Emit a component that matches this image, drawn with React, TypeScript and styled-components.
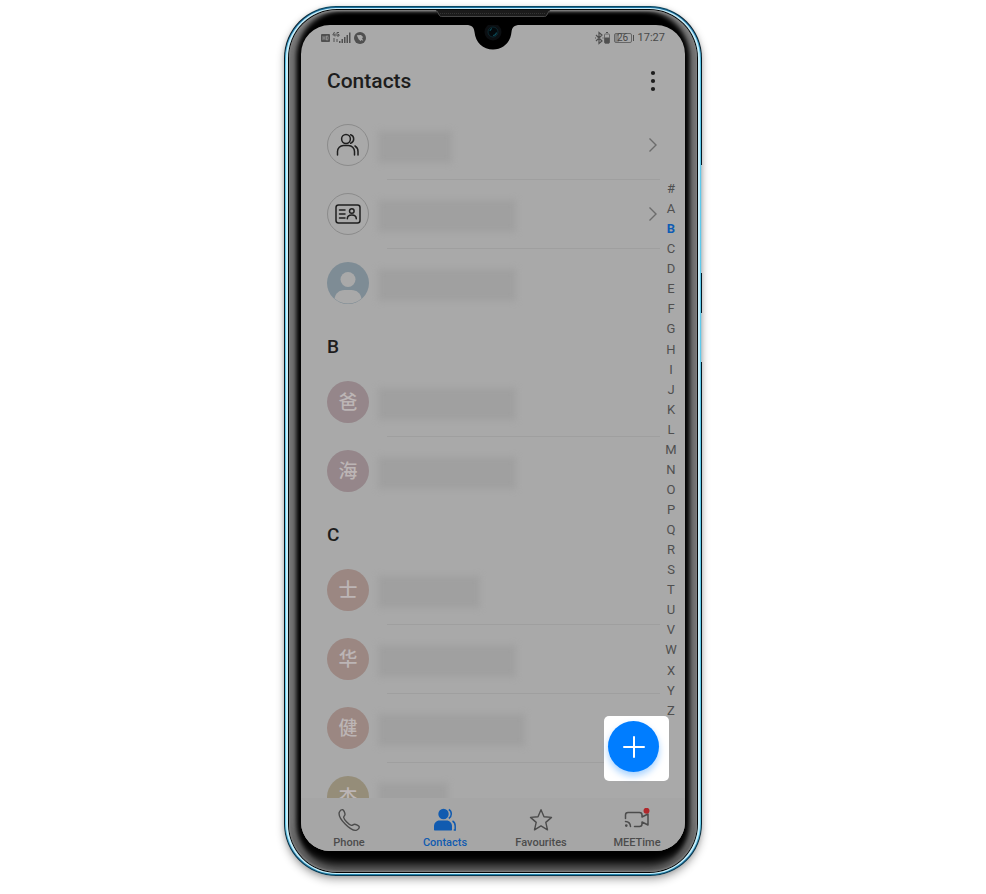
import React from "react";
import styled, { createGlobalStyle, css } from "styled-components";

const font = `Roboto, "Noto Sans CJK SC", sans-serif`;

const GlobalStyle = createGlobalStyle`
  * { box-sizing: border-box; }
  body { margin: 0; background: #fff; font-family: ${font}; }
  button { font: inherit; color: inherit; border: 0; background: none; padding: 0; cursor: pointer; }
  a { color: inherit; text-decoration: none; }
  ul, ol, h1, h2 { margin: 0; padding: 0; list-style: none; font-weight: 500; }
`;

const Stage = styled.main`
  display: flex;
  justify-content: center;
  min-height: 100vh;
  padding: 6px 0 18px;
  overflow: hidden;
`;

const Shell = styled.div`
  position: relative;
  display: flex;
  width: 100%;
  max-width: 418px;
  height: calc(100vh - 24px);
  min-height: 600px;
  padding: 1px;
  border-radius: 52px;
  background: linear-gradient(180deg, #0a4a63 0, #061a26 14px, #08131b 90%, #083850 100%);
  box-shadow: 0 4px 9px rgba(0, 0, 0, 0.3), 0 1px 4px rgba(0, 0, 0, 0.12);
`;

const SideKey = styled.span<{ $top: number; $length: number }>`
  position: absolute;
  right: 0;
  top: ${(p) => p.$top}px;
  width: 1px;
  height: ${(p) => p.$length}px;
  background: #b4c6cd;
`;

const Rim = styled.div`
  display: flex;
  flex: 1;
  min-width: 0;
  padding: 1px;
  border-radius: 51px;
  background: linear-gradient(180deg, #1c6f9f 0, #2a86b8 24px, #5cc8ea 60px, #63cbe9 94%, #2b85b4 98%, #2385ad 100%);
`;

const RimLight = styled.div`
  display: flex;
  flex: 1;
  min-width: 0;
  padding: 1px 2px;
  border-radius: 50px;
  background: #c6eefa;
`;

const Groove = styled.div`
  display: flex;
  flex: 1;
  min-width: 0;
  padding: 1px;
  border-radius: 49px;
  background: #050505;
`;

const Bezel = styled.div`
  display: flex;
  flex: 1;
  min-width: 0;
  padding: 15px 12px 21px;
  border-radius: 48px;
  background: #000;
  box-shadow:
    inset 0 0 2px 1px #858585,
    inset 0 -8px 8px 0 #585858,
    inset 7px 0 5px 0 #7e7e7e,
    inset -7px 0 5px 0 #7e7e7e;
`;

const Speaker = styled.svg`
  position: absolute;
  top: 4px;
  left: 50%;
  width: 114px;
  height: 7px;
  margin-left: -57px;
`;

const Screen = styled.div`
  position: relative;
  display: flex;
  flex: 1;
  min-width: 0;
  flex-direction: column;
  overflow: hidden;
  border-radius: 29px;
  background: #a9a9a9;
  color: #1d1d1d;
`;

const Notch = styled.svg`
  position: absolute;
  top: -1px;
  left: 50%;
  width: 54px;
  height: 26px;
  margin-left: -27px;
`;

const StatusBar = styled.div`
  display: flex;
  justify-content: space-between;
  height: 25px;
  padding: 1px 20px 0 19px;
  color: #484848;
  font-size: 11px;
  line-height: 24px;
`;

const StatusGroup = styled.div`
  display: flex;
  align-items: center;
  gap: 4px;
`;

const Battery = styled.span`
  position: relative;
  display: block;
  width: 18px;
  height: 10px;
  margin-right: 2px;
  border: 1px solid #666;
  border-radius: 2px;
  font-size: 10px;
  line-height: 8px;
  text-align: center;
  background: linear-gradient(90deg, #888 4px, transparent 4px);
  &::after {
    content: "";
    position: absolute;
    right: -3px;
    top: 1px;
    width: 1px;
    height: 6px;
    background: #505050;
  }
`;

const TitleBar = styled.header`
  display: flex;
  align-items: center;
  justify-content: space-between;
  height: 60px;
  padding: 1px 26px 0;
  h1 { font-size: 21px; line-height: 30px; font-weight: 500; }
`;

const MenuButton = styled.button`
  display: flex;
  width: 12px;
  height: 28px;
  align-items: center;
  justify-content: center;
`;

const Body = styled.div`
  position: relative;
  display: flex;
  flex: 1;
  min-height: 0;
`;

const List = styled.div`
  flex: 1;
  min-width: 0;
  padding-left: 26px;
  overflow: hidden;
`;

const Row = styled.li`
  position: relative;
  display: flex;
  align-items: center;
  gap: 9px;
  height: 69px;
`;

const Divided = styled(Row)`
  &::after {
    content: "";
    position: absolute;
    left: 60px;
    right: 0;
    bottom: -1px;
    height: 1px;
    background: #9f9f9f;
  }
`;

const SectionTitle = styled.h2`
  height: 50px;
  padding-top: 18px;
  font-size: 19px;
  line-height: 24px;
`;

const Avatar = styled.span<{ $tone?: string }>`
  display: flex;
  flex: none;
  align-items: center;
  justify-content: center;
  width: 42px;
  height: 42px;
  border-radius: 50%;
  overflow: hidden;
  font-size: 19px;
  line-height: 24px;
  color: #bcb5b5;
  ${(p) => (p.$tone ? css`padding-top: 2px; background: ${p.$tone};` : css`border: 1px solid #8b8b8b;`)}
`;

const Portrait = styled(Avatar)`
  padding-top: 0;
`;

const HiddenName = styled.span<{ $width: number }>`
  width: ${(p) => p.$width}px;
  height: 32px;
  margin-top: 4px;
  background: #a0a0a0;
  filter: blur(3px);
`;

const Chevron = styled.svg`
  width: 10px;
  height: 16px;
  margin: 0 2px 0 auto;
`;

const IndexList = styled.ol`
  display: flex;
  flex: none;
  flex-direction: column;
  justify-content: space-between;
  width: 25px;
  padding: 69px 3px 77px 0;
  font-size: 13px;
  line-height: 20px;
  font-weight: 400;
  text-align: center;
  color: #4f4f4f;
`;

const IndexLink = styled.a<{ $active: boolean }>`
  ${(p) => p.$active && css`color: #0f5cb4; font-weight: 700;`}
`;

const Spotlight = styled.div`
  position: absolute;
  right: 16px;
  bottom: 17px;
  width: 65px;
  height: 65px;
  padding: 5px 0 0 4px;
  border-radius: 5px;
  background: #fff;
`;

const AddButton = styled.button`
  display: flex;
  align-items: center;
  justify-content: center;
  width: 51px;
  height: 51px;
  border-radius: 50%;
  background: #007dff;
  box-shadow: 0 4px 7px rgba(0, 125, 255, 0.35);
`;

const Nav = styled.nav`
  display: grid;
  grid-template-columns: repeat(4, 1fr);
  flex: none;
  height: 53px;
  background: #a6a6a6;
`;

const Tab = styled.a<{ $active?: boolean }>`
  display: flex;
  flex-direction: column;
  align-items: center;
  gap: 4px;
  padding-top: 10px;
  font-size: 11px;
  font-weight: 500;
  line-height: 14px;
  color: ${(p) => (p.$active ? "#115bb0" : "#4c4c4c")};
`;

const contactTones = { rose: "#95868a", clay: "#9b8782", sand: "#958d79" };

const sections = [
  {
    letter: "B",
    people: [
      { glyph: "爸", tone: contactTones.rose, width: 138 },
      { glyph: "海", tone: contactTones.rose, width: 138 },
    ],
  },
  {
    letter: "C",
    people: [
      { glyph: "士", tone: contactTones.clay, width: 102 },
      { glyph: "华", tone: contactTones.clay, width: 138 },
      { glyph: "健", tone: contactTones.clay, width: 147 },
      { glyph: "杰", tone: contactTones.sand, width: 70 },
    ],
  },
];

const GroupIcon = () => (
  <svg width="24" height="24" viewBox="0 0 24 24" fill="none" stroke="#1f1f1f" strokeWidth="1.5" strokeLinecap="round">
    <circle cx="10" cy="6" r="4.4" />
    <path d="M14.6 1.8a4.4 4.4 0 0 1 0 8.4" />
    <path d="M1.5 22v-3.5a6 6 0 0 1 6-6h5a6 6 0 0 1 6 6V22" />
    <path d="M19 13c2 1.200 3 3 3 5.500V22" />
  </svg>
);

const CardIcon = () => (
  <svg width="26" height="20" viewBox="0 0 26 20" fill="none" stroke="#1f1f1f" strokeWidth="1.500" strokeLinecap="round">
    <rect x="1" y="1" width="24" height="18" rx="2.500" />
    <path d="M4.500 6h5.500M4.500 10h5.500M4.500 14h5.500M12.300 14.800c0-2.700 1.700-3.800 4.500-3.800s4.500 1.100 4.500 3.800" />
    <circle cx="16.800" cy="7" r="2.300" />
  </svg>
);

const ProfileIcon = () => (
  <svg width="42" height="42" viewBox="0 0 42 42" fill="#a9a9a9">
    <circle cx="21" cy="17.500" r="7.500" />
    <path d="M7.500 36.500c1-5 4.500-8.500 10-8.500h7c5.500 0 9 3.500 10 8.500A20.500 20.500 0 0 1 7.500 36.500z" />
  </svg>
);

const PhoneIcon = () => (
  <svg width="24" height="24" viewBox="0 0 24 24" fill="none" stroke="#4c4c4c" strokeWidth="1.400" strokeLinejoin="round">
    <path d="M2.300 4.200C3 2.500 4.500 1.500 5.700 1.700c1.100.3 2.300 3.300 2.300 4.700 0 1.200-1.500 1.900-1.300 3.100.4 2.300 5.100 7.300 7.600 7.900 1.200.2 2-1.200 3.200-1.200 1.400 0 4.500 1.400 4.700 2.500.2 1.300-.8 2.800-2.500 3.500C14 24 .4 10 2.300 4.200z" />
  </svg>
);

const PeopleIcon = () => (
  <svg width="24" height="24" viewBox="0 0 24 24" fill="#115bb0">
    <circle cx="10.500" cy="6" r="5.200" />
    <path d="M1 21.500V18c0-3 2.300-5.500 5.500-5.500h7c3.200 0 5.500 2.500 5.500 5.500v3.500c0 .6-.4 1-1 1H2c-.6 0-1-.4-1-1z" />
    <path d="M15.800 1.500c3.300 1.800 3.300 7 0 9M19.500 13c2 1 2.700 3 2.700 5v4h-1.500" fill="none" stroke="#115bb0" strokeWidth="1.500" />
  </svg>
);

const StarIcon = () => (
  <svg width="24" height="24" viewBox="0 0 24 24" fill="none" stroke="#4c4c4c" strokeWidth="1.400" strokeLinejoin="round">
    <path d="M12 1.700l3 7 7.500.7-5.700 5 1.700 7.400L12 17.900l-6.500 3.900 1.700-7.400-5.700-5 7.500-.7z" />
  </svg>
);

const MeetIcon = () => (
  <svg width="26" height="24" viewBox="0 0 26 24" fill="none" stroke="#4c4c4c" strokeWidth="1.500" strokeLinecap="round" strokeLinejoin="round">
    <path d="M1.500 10.500V7c0-1.700 1-2.500 2.500-2.500h11.500c1.500 0 2.500 1 2.500 2.500v2l6-3v11l-6-3v2c0 1.500-1 2.500-2.500 2.500H10.500" />
    <path d="M1.500 13.500c3 .2 4.800 2 5 5" />
    <circle cx="2.300" cy="17.600" r=".6" fill="#4c4c4c" />
    <circle cx="22.500" cy="2.800" r="3" fill="#b0282c" stroke="none" />
  </svg>
);

const ChevronIcon = () => (
  <Chevron viewBox="0 0 10 16" fill="none" stroke="#6c6c6c" strokeWidth="1.400">
    <path d="M1.500 1.500L8 8l-6.500 6.500" />
  </Chevron>
);

export default function App() {
  return (
    <>
      <GlobalStyle />
      <Stage>
        <Shell>
          <Rim>
            <RimLight>
              <Groove>
                <Bezel>
                  <Screen>
                    <StatusBar>
                      <StatusGroup aria-label="Signal">
                        <svg width="47" height="14" viewBox="0 0 47 14" fill="#505050">
                          <rect x="1" y="3" width="9" height="8" rx="1" />
                          <path d="M3 5v4M5 5v4M3 7h2M6.500 5v4h1.200q1-2 0-4z" stroke="#a0a0a0" strokeWidth=".7" fill="none" />
                          <path d="M14.500 1l-1.700 3h2.500M15 2.500v3M19 1.500h-2v3.500h2V3.500h-1M14 7v4M17 8v3" stroke="#505050" strokeWidth="1" fill="none" />
                          <path d="M19 10h1.500v2H19zM21.500 8H23v4h-1.500zM24 6h1.500v6H24zM26.500 4H28v8h-1.500zM29 1.500h1.500V12H29z" />
                          <circle cx="40" cy="7" r="6" />
                          <path d="M36.800 4.300l4.200-.2 2.300 2.200-1.300.7 1.300 2.800-2.200-.8-.3 1.200-2.200-2z" fill="#a9a9a9" />
                        </svg>
                      </StatusGroup>
                      <StatusGroup>
                        <svg width="16" height="14" viewBox="0 0 16 14" fill="none" stroke="#505050" strokeWidth="1.200">
                          <path d="M2 4l6 6-3 2.500V1.500L8 4l-6 6M1 7h1M8.500 7h1" />
                          <rect x="10.500" y="3" width="5" height="9" rx=".5" stroke="#686868" strokeWidth="1" />
                          <path d="M11 7h4v5h-4zM12 1.500h2" fill="#505050" strokeWidth="1" />
                        </svg>
                        <Battery>26</Battery>
                        <time>17:27</time>
                      </StatusGroup>
                    </StatusBar>

                    <TitleBar>
                      <h1>Contacts</h1>
                      <MenuButton aria-label="More options">
                        <svg width="6" height="22" viewBox="0 0 6 22" fill="#1d1d1d">
                          <circle cx="3" cy="3" r="2.100" />
                          <circle cx="3" cy="11" r="2.100" />
                          <circle cx="3" cy="19" r="2.100" />
                        </svg>
                      </MenuButton>
                    </TitleBar>

                    <Body>
                      <List>
                        <ul>
                          <Divided>
                            <Avatar><GroupIcon /></Avatar>
                            <HiddenName $width={74} />
                            <ChevronIcon />
                          </Divided>
                          <Divided>
                            <Avatar><CardIcon /></Avatar>
                            <HiddenName $width={138} />
                            <ChevronIcon />
                          </Divided>
                          <Row>
                            <Portrait $tone="#7e8c95"><ProfileIcon /></Portrait>
                            <HiddenName $width={138} />
                          </Row>
                        </ul>
                        {sections.map((section) => (
                          <section key={section.letter} id={`section-${section.letter}`}>
                            <SectionTitle>{section.letter}</SectionTitle>
                            <ul>
                              {section.people.map((person, i) => {
                                const Line = i < section.people.length - 1 ? Divided : Row;
                                return (
                                  <Line key={person.glyph}>
                                    <Avatar $tone={person.tone}>{person.glyph}</Avatar>
                                    <HiddenName $width={person.width} />
                                  </Line>
                                );
                              })}
                            </ul>
                          </section>
                        ))}
                      </List>
                      <IndexList>
                        {"#ABCDEFGHIJKLMNOPQRSTUVWXYZ".split("").map((letter) => (
                          <li key={letter}>
                            <IndexLink href={`#section-${letter}`} $active={letter === "B"}>{letter}</IndexLink>
                          </li>
                        ))}
                      </IndexList>
                      <Spotlight>
                        <AddButton aria-label="Add contact">
                          <svg width="22" height="22" viewBox="0 0 22 22" stroke="#fff" strokeWidth="2" strokeLinecap="round">
                            <path d="M11 1v20M1 11h20" />
                          </svg>
                        </AddButton>
                      </Spotlight>
                    </Body>

                    <Nav>
                      <Tab href="#phone"><PhoneIcon />Phone</Tab>
                      <Tab href="#contacts" $active><PeopleIcon />Contacts</Tab>
                      <Tab href="#favourites"><StarIcon />Favourites</Tab>
                      <Tab href="#meetime"><MeetIcon />MEETime</Tab>
                    </Nav>

                    <Notch viewBox="0 0 54 26">
                      <path d="M0 0v1c6 0 8 2.500 8.500 7C9.500 18.500 17 25.500 27 25.500S44.500 18.500 45.500 8C46 3.500 48 1 54 1V0z" fill="#000" />
                      <circle cx="27" cy="8" r="8.500" fill="#0b0e11" />
                      <circle cx="27" cy="8" r="5" fill="#03080b" stroke="#0b2830" strokeWidth="1" />
                      <path d="M24 7a3.500 3.500 0 0 1 2-2.500M27 11.500a3.500 3.500 0 0 0 3.500-3" stroke="#0d4a58" strokeWidth="1.200" fill="none" />
                    </Notch>
                  </Screen>
                </Bezel>
              </Groove>
            </RimLight>
          </Rim>
          <SideKey $top={159} $length={108} />
          <SideKey $top={307} $length={49} />
          <Speaker viewBox="0 0 114 7">
            <path d="M0 0h114l-3 5.500q-.5 1-2 1H5q-1.500 0-2-1z" fill="#1b1b1b" />
            <path d="M1 1l2.500 4.500q.5 1 2 1h103q1.500 0 2-1L113 1" fill="none" stroke="#555" strokeWidth=".8" />
            <path d="M4 3.500h106" stroke="#333" strokeWidth="1" strokeDasharray="1 1" />
          </Speaker>
        </Shell>
      </Stage>
    </>
  );
}
